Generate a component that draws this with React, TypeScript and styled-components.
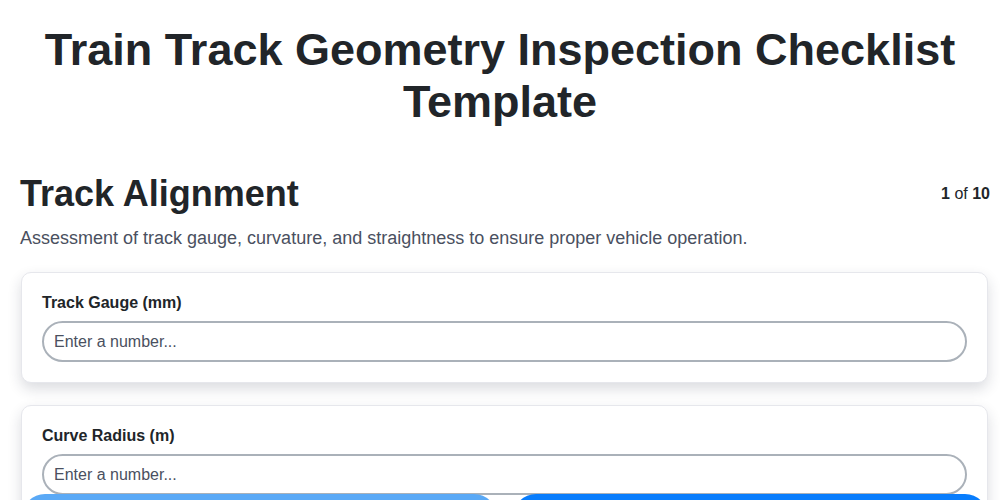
import React, { useState } from "react";
import styled, { createGlobalStyle } from "styled-components";

const GlobalStyle = createGlobalStyle`
  * { box-sizing: border-box; }
  body {
    margin: 0;
    background: #ffffff;
    color: #212529;
    font-family: "Liberation Sans", Arial, sans-serif;
  }
`;

const Page = styled.div`
  padding: 0 10px 80px 20px;
`;

const Title = styled.h1`
  margin: 0 10px 0 0;
  padding-top: 24px;
  text-align: center;
  font-size: 45px;
  line-height: 52px;
  font-weight: 700;
  color: #212529;
`;

const SectionHead = styled.div`
  display: flex;
  align-items: center;
  justify-content: space-between;
  margin-top: 44px;
`;

const SectionTitle = styled.h2`
  margin: 0;
  font-size: 36px;
  line-height: 44px;
  font-weight: 700;
  color: #212529;
`;

const Counter = styled.div`
  font-size: 16px;
  color: #212529;
  b { font-weight: 700; }
`;

const Description = styled.p`
  margin: 10px 0 22px;
  font-size: 18px;
  line-height: 24px;
  color: #4a5060;
`;

const Card = styled.div`
  margin: 0 2px 22px 1px;
  padding: 20px;
  background: #fff;
  border: 1px solid #e6e7ec;
  border-radius: 10px;
  box-shadow: 0 6px 14px rgba(30, 35, 60, 0.16);
`;

const Label = styled.label`
  display: block;
  margin-bottom: 9px;
  font-size: 16px;
  line-height: 19px;
  font-weight: 700;
  color: #212529;
`;

const Input = styled.input`
  display: block;
  width: 100%;
  height: 41px;
  padding: 0 10px;
  border: 2px solid #aab1b9;
  border-radius: 21px;
  font-family: inherit;
  font-size: 16px;
  color: #212529;
  background: #fff;
  outline: none;
  &::placeholder { color: #4a5060; }
`;

const Footer = styled.div`
  position: fixed;
  left: 0;
  right: 0;
  bottom: -40px;
  display: flex;
  gap: 16px;
  padding: 0 12px 0 22px;
`;

const NavButton = styled.button<{ $primary?: boolean }>`
  flex: 1;
  height: 46px;
  padding-top: 20px;
  border: none;
  border-radius: 23px;
  background: ${({ $primary }) => ($primary ? "#087dfd" : "#5aa9f6")};
  color: #fff;
  font-family: inherit;
  font-size: 16px;
  font-weight: 700;
`;

const fields = [
  { id: "gauge", label: "Track Gauge (mm)" },
  { id: "radius", label: "Curve Radius (m)" },
  { id: "straight", label: "Straightness Deviation (mm)" },
];

export default function App() {
  const [values, setValues] = useState<Record<string, string>>({});

  return (
    <>
      <GlobalStyle />
      <Page>
        <Title>Train Track Geometry Inspection Checklist Template</Title>
        <SectionHead>
          <SectionTitle>Track Alignment</SectionTitle>
          <Counter>
            <b>1</b> of <b>10</b>
          </Counter>
        </SectionHead>
        <Description>
          Assessment of track gauge, curvature, and straightness to ensure proper vehicle operation.
        </Description>
        {fields.map((f) => (
          <Card key={f.id}>
            <Label htmlFor={f.id}>{f.label}</Label>
            <Input
              id={f.id}
              type="number"
              placeholder="Enter a number..."
              value={values[f.id] ?? ""}
              onChange={(e) => setValues({ ...values, [f.id]: e.target.value })}
            />
          </Card>
        ))}
      </Page>
      <Footer>
        <NavButton disabled>Previous</NavButton>
        <NavButton $primary>Next</NavButton>
      </Footer>
    </>
  );
}
